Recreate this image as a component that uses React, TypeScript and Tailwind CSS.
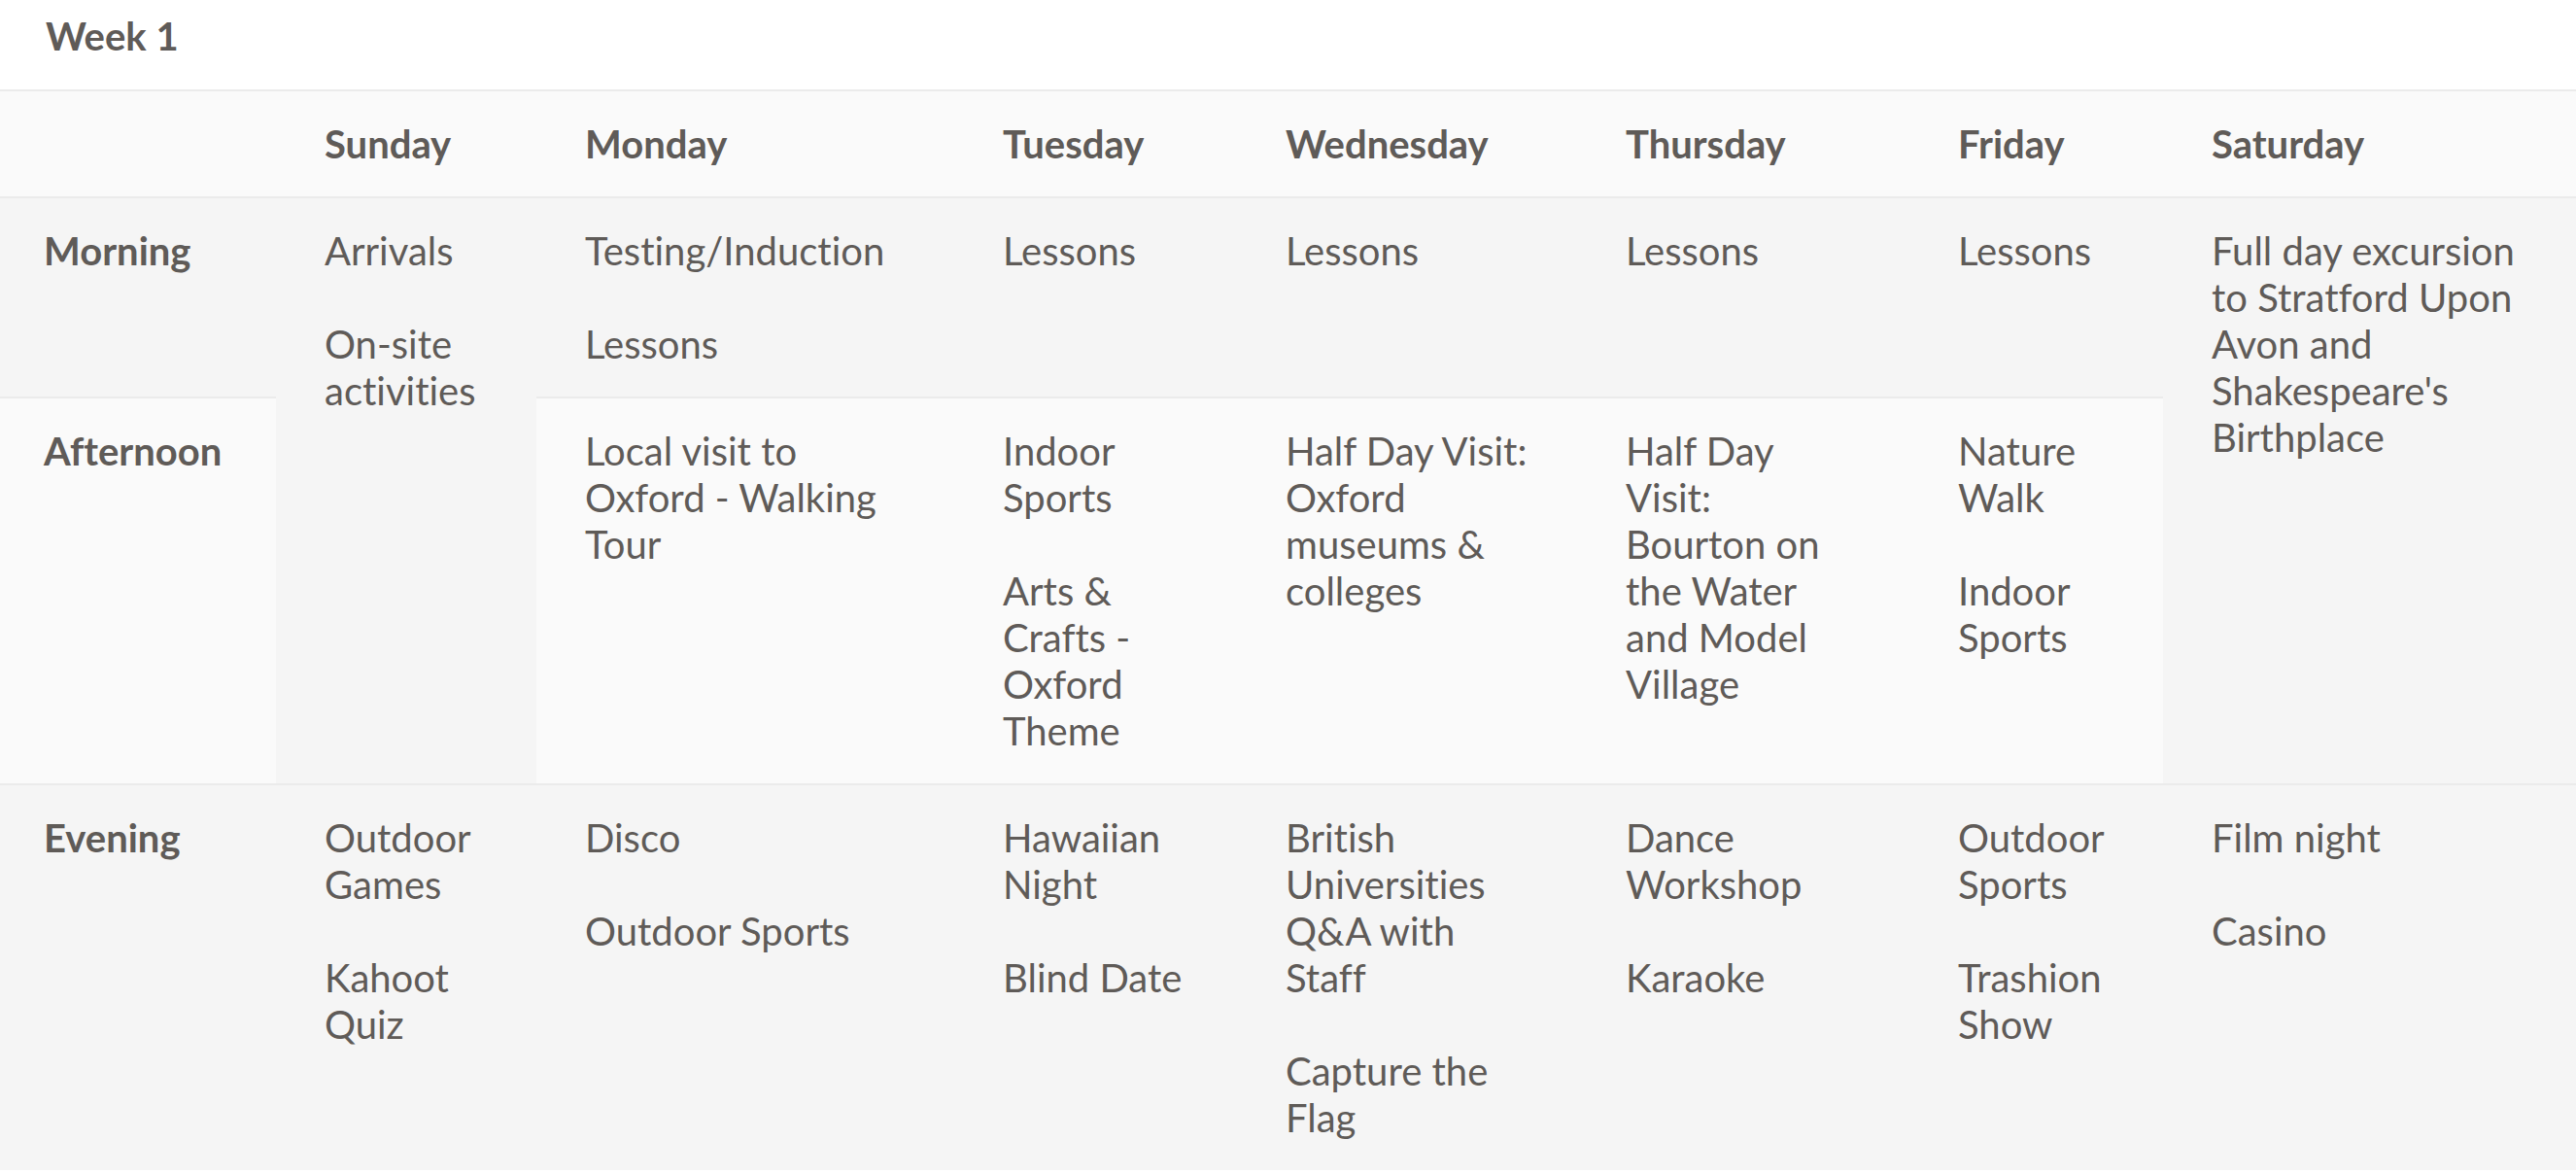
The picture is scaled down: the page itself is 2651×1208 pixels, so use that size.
import React from "react";

type Slot = string[];

const days = ["Sunday", "Monday", "Tuesday", "Wednesday", "Thursday", "Friday", "Saturday"];

// padding-right per day column (content widths tuned to reproduce wrapping)
const dayPad = [
  "pl-[50px] pr-[50px]",
  "pl-[50px] pr-[50px]",
  "pl-[50px] pr-[50px]",
  "pl-[50px] pr-[40px]",
  "pl-[50px] pr-[55px]",
  "pl-[50px] pr-[50px]",
  "pl-[50px] pr-[50px]",
];

const morning: Slot[] = [
  ["Arrivals", "On-site activities"],
  ["Testing/Induction", "Lessons"],
  ["Lessons"],
  ["Lessons"],
  ["Lessons"],
  ["Lessons"],
  ["Full day excursion to Stratford Upon Avon and Shakespeare's Birthplace"],
];

const afternoon: Slot[] = [
  ["Local visit to Oxford - Walking Tour"],
  ["Indoor Sports", "Arts & Crafts - Oxford Theme"],
  ["Half Day Visit: Oxford museums & colleges"],
  ["Half Day Visit: Bourton on the Water and Model Village"],
  ["Nature Walk", "Indoor Sports"],
];

const evening: Slot[] = [
  ["Outdoor Games", "Kahoot Quiz"],
  ["Disco", "Outdoor Sports"],
  ["Hawaiian Night", "Blind Date"],
  ["British Universities Q&A with Staff", "Capture the Flag"],
  ["Dance Workshop", "Karaoke"],
  ["Outdoor Sports", "Trashion Show"],
  ["Film night", "Casino"],
];

function Items({ items }: { items: Slot }) {
  return (
    <div className="flex flex-col gap-[48px]">
      {items.map((t, i) => (
        <p key={i}>{t}</p>
      ))}
    </div>
  );
}

const base = "align-top text-left pt-[30px] pb-[30px] border-t-2 border-[#ebebeb]";
const odd = "bg-[#f5f5f5]";
const even = "bg-[#fafafa]";

export default function App() {
  return (
    <div className="min-h-screen bg-white font-[family-name:Lato,sans-serif] text-[40px] leading-[48px] text-[#5f5b58] [font-variant-ligatures:none]">
      <h3 className="pl-[47px] pt-[13px] pb-[31px] font-bold">Week 1</h3>
      <table className="w-full table-fixed border-separate border-spacing-0">
        <colgroup>
          <col className="w-[284px]" />
          <col className="w-[268px]" />
          <col className="w-[430px]" />
          <col className="w-[291px]" />
          <col className="w-[350px]" />
          <col className="w-[342px]" />
          <col className="w-[261px]" />
          <col />
        </colgroup>
        <thead>
          <tr>
            <th className={`${base} ${even} pl-[45px] pr-[30px] border-[#e8e8e8]`}></th>
            {days.map((d, i) => (
              <th key={d} className={`${base} ${even} ${dayPad[i]} font-bold`}>
                {d}
              </th>
            ))}
          </tr>
        </thead>
        <tbody>
          <tr>
            <th className={`${base} ${odd} pl-[45px] pr-[30px] font-bold`}>Morning</th>
            {morning.map((items, i) => {
              const span = i === 0 || i === 6 ? 2 : 1;
              return (
                <td key={i} rowSpan={span} className={`${base} ${odd} ${dayPad[i]}`}>
                  <Items items={items} />
                </td>
              );
            })}
          </tr>
          <tr>
            <th className={`${base} ${even} pl-[45px] pr-[30px] font-bold`}>Afternoon</th>
            {afternoon.map((items, i) => (
              <td key={i} className={`${base} ${even} ${dayPad[i + 1]}`}>
                <Items items={items} />
              </td>
            ))}
          </tr>
          <tr>
            <th className={`${base} ${odd} pl-[45px] pr-[30px] pb-[28px] font-bold`}>Evening</th>
            {evening.map((items, i) => (
              <td key={i} className={`${base} ${odd} ${dayPad[i]} pb-[28px]`}>
                <Items items={items} />
              </td>
            ))}
          </tr>
        </tbody>
      </table>
    </div>
  );
}
